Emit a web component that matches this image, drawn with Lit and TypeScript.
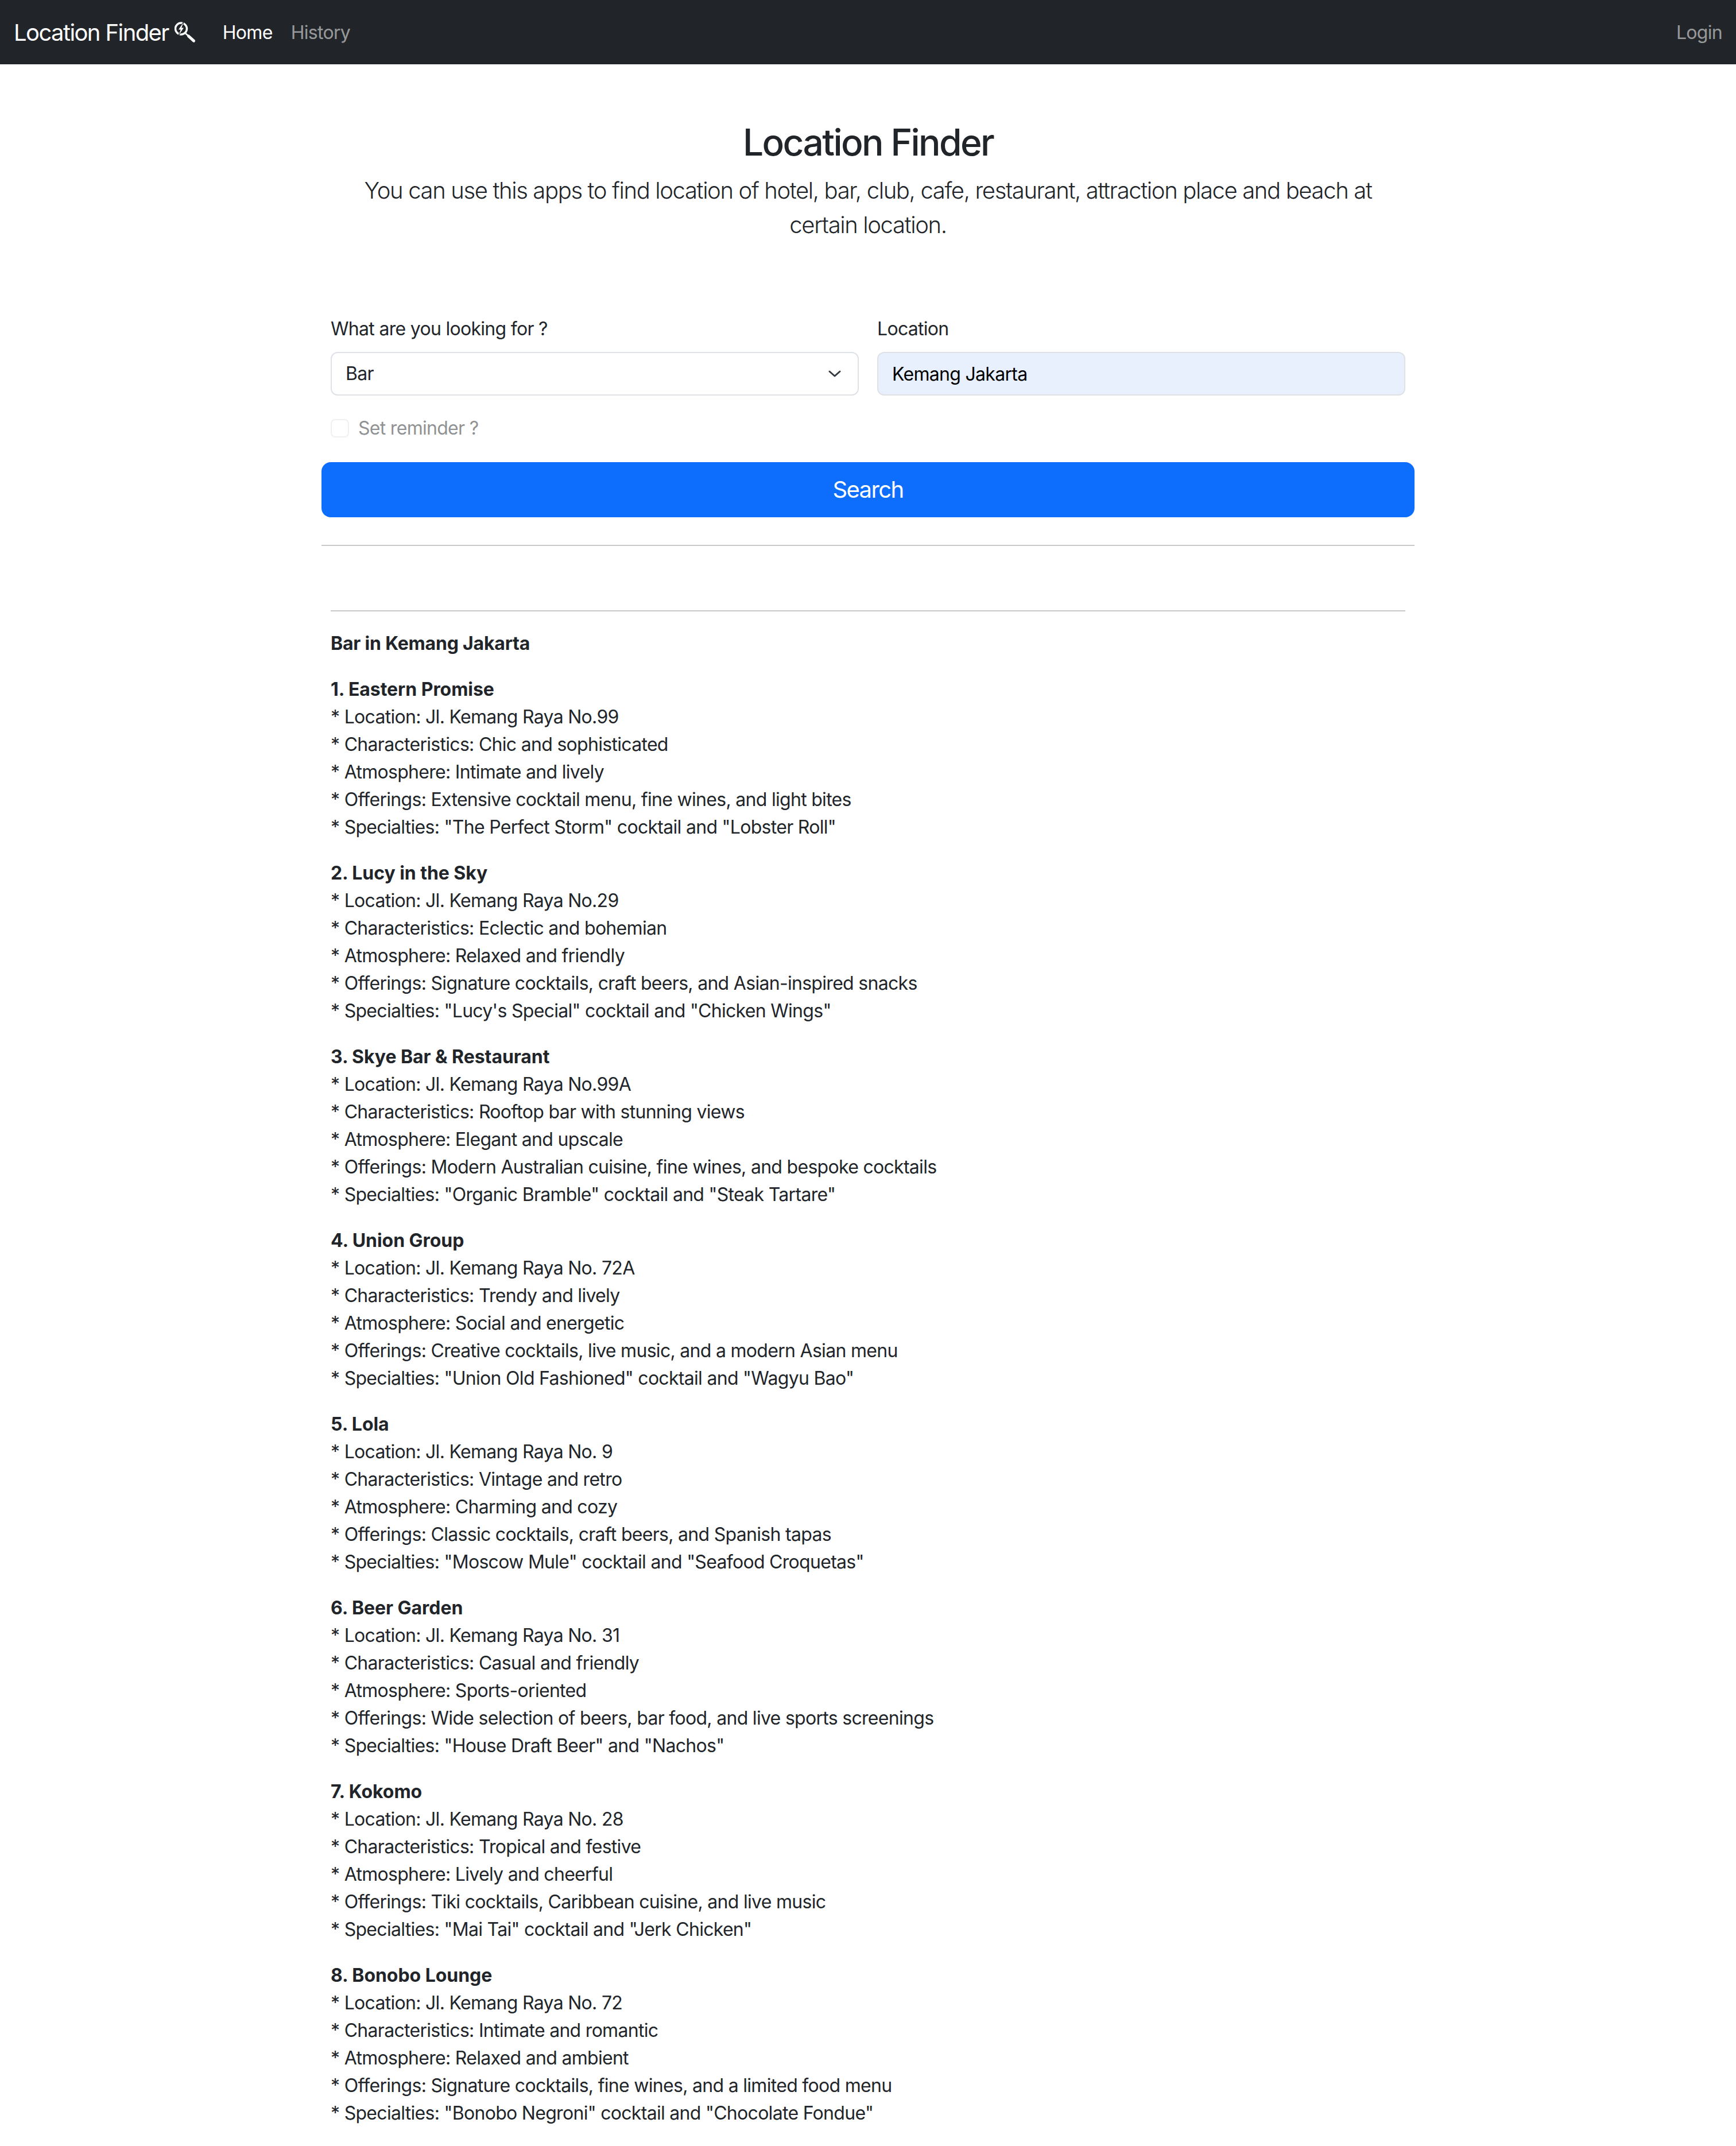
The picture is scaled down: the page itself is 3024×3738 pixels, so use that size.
import { LitElement, html, css, svg } from 'lit';
import { customElement } from 'lit/decorators.js';

// the list as it shows on the page
const PLACES = [
  { name: '1. Eastern Promise', lines: ['Location: Jl. Kemang Raya No.99', 'Characteristics: Chic and sophisticated', 'Atmosphere: Intimate and lively', 'Offerings: Extensive cocktail menu, fine wines, and light bites', 'Specialties: "The Perfect Storm" cocktail and "Lobster Roll"'] },
  { name: '2. Lucy in the Sky', lines: ['Location: Jl. Kemang Raya No.29', 'Characteristics: Eclectic and bohemian', 'Atmosphere: Relaxed and friendly', 'Offerings: Signature cocktails, craft beers, and Asian-inspired snacks', 'Specialties: "Lucy\'s Special" cocktail and "Chicken Wings"'] },
  { name: '3. Skye Bar & Restaurant', lines: ['Location: Jl. Kemang Raya No.99A', 'Characteristics: Rooftop bar with stunning views', 'Atmosphere: Elegant and upscale', 'Offerings: Modern Australian cuisine, fine wines, and bespoke cocktails', 'Specialties: "Organic Bramble" cocktail and "Steak Tartare"'] },
  { name: '4. Union Group', lines: ['Location: Jl. Kemang Raya No. 72A', 'Characteristics: Trendy and lively', 'Atmosphere: Social and energetic', 'Offerings: Creative cocktails, live music, and a modern Asian menu', 'Specialties: "Union Old Fashioned" cocktail and "Wagyu Bao"'] },
  { name: '5. Lola', lines: ['Location: Jl. Kemang Raya No. 9', 'Characteristics: Vintage and retro', 'Atmosphere: Charming and cozy', 'Offerings: Classic cocktails, craft beers, and Spanish tapas', 'Specialties: "Moscow Mule" cocktail and "Seafood Croquetas"'] },
  { name: '6. Beer Garden', lines: ['Location: Jl. Kemang Raya No. 31', 'Characteristics: Casual and friendly', 'Atmosphere: Sports-oriented', 'Offerings: Wide selection of beers, bar food, and live sports screenings', 'Specialties: "House Draft Beer" and "Nachos"'] },
  { name: '7. Kokomo', lines: ['Location: Jl. Kemang Raya No. 28', 'Characteristics: Tropical and festive', 'Atmosphere: Lively and cheerful', 'Offerings: Tiki cocktails, Caribbean cuisine, and live music', 'Specialties: "Mai Tai" cocktail and "Jerk Chicken"'] },
  { name: '8. Bonobo Lounge', lines: ['Location: Jl. Kemang Raya No. 72', 'Characteristics: Intimate and romantic', 'Atmosphere: Relaxed and ambient', 'Offerings: Signature cocktails, fine wines, and a limited food menu', 'Specialties: "Bonobo Negroni" cocktail and "Chocolate Fondue"'] },
];

const finderIcon = svg`
  <svg class="brand-icon" viewBox="0 0 38 38" fill="none" stroke="#fff">
    <circle cx="11.5" cy="12" r="10" stroke-width="3.4" />
    <path d="M18.5 19.5l5.5 5" stroke-width="2.6" />
    <path d="M24.5 25l9 8.2" stroke-width="5" stroke-linecap="round" />
    <polygon class="bolt" points="15.5,1 7,13.5 10.8,13.5 7.5,23 16,10.5 12.2,10.5" />
  </svg>`;

@customElement('app-root')
export class AppRoot extends LitElement {
  static styles = css`
    :host {
      display: block;
      height: 3738px;
      overflow: hidden;
      background: #fff;
      color: #212529;
      font-family: Inter, 'Liberation Sans', sans-serif;
      font-size: 32px;
      line-height: 48px;
      letter-spacing: -0.7px;
    }
    .navbar {
      display: flex;
      box-sizing: border-box;
      align-items: center;
      height: 112px;
      padding: 2px 24px 0;
      background: #212529;
    }
    .brand {
      display: flex;
      align-items: center;
      margin-right: 30px;
      color: #fff;
      font-size: 40px;
      letter-spacing: -1.6px;
      line-height: 60px;
    }
    .brand-icon {
      width: 38px;
      height: 38px;
      margin: 0 0 0 10px;
    }
    .bolt {
      fill: #fff;
      stroke: #212529;
      stroke-width: 2;
      paint-order: stroke;
    }
    .nav-link {
      padding: 0 16px;
      color: rgba(255, 255, 255, 0.55);
    }
    .nav-link.active {
      color: #fff;
    }
    .spacer {
      flex: 1;
    }
    .login {
      padding: 0;
    }
    .main {
      width: 1904px;
      margin: 0 auto;
    }
    .hero {
      padding: 97px 16px 0;
      text-align: center;
    }
    .hero h3 {
      margin: 0 0 16px;
      font-size: 64px;
      font-weight: 500;
      letter-spacing: -2.6px;
      line-height: 77px;
    }
    .lead {
      margin: 0;
      font-size: 40px;
      font-weight: 300;
      letter-spacing: -1.36px;
      line-height: 60px;
    }
    .form-row {
      display: grid;
      grid-template-columns: 1fr 1fr;
      gap: 32px;
      margin-top: 127px;
      padding: 0 16px;
    }
    label {
      display: block;
      margin-bottom: 16px;
    }
    .select-wrap {
      position: relative;
    }
    .select-wrap svg {
      position: absolute;
      top: 32px;
      right: 31px;
      width: 22px;
      height: 12px;
    }
    select,
    input[type='text'] {
      display: block;
      box-sizing: border-box;
      width: 100%;
      height: 76px;
      padding: 0 24px;
      border: 2px solid #dee2e6;
      border-radius: 12px;
      font: inherit;
      letter-spacing: inherit;
      outline: none;
    }
    select {
      appearance: none;
      background: #fff;
      color: #212529;
    }
    input[type='text'] {
      background: #e8f0fe;
      color: #000;
    }
    .check {
      display: flex;
      align-items: center;
      gap: 16px;
      margin-top: 33px;
      padding: 0 16px;
      opacity: 0.5;
    }
    .box {
      box-sizing: border-box;
      width: 32px;
      height: 32px;
      border: 2px solid #dee2e6;
      border-radius: 8px;
    }
    .search {
      display: block;
      width: 100%;
      height: 96px;
      margin-top: 35px;
      border: none;
      border-radius: 16px;
      background: #0d6efd;
      color: #fff;
      font: inherit;
      font-size: 40px;
      letter-spacing: -1.6px;
    }
    hr {
      height: 2px;
      margin: 0;
      border: none;
      background: #c8c9ca;
    }
    .rule-top {
      margin-top: 48px;
    }
    .results {
      padding: 112px 16px 0;
    }
    .results h6 {
      margin: 32px 0;
      font-size: 32px;
      font-weight: 700;
      letter-spacing: -0.2px;
      line-height: 48px;
    }
    .place {
      margin: 0 0 32px;
    }
    .place b {
      display: block;
      font-weight: 700;
      letter-spacing: -0.05px;
    }
    .place span {
      display: block;
    }
  `;

  render() {
    return html`
      <nav class="navbar">
        <div class="brand">Location Finder${finderIcon}</div>
        <div class="nav-link active">Home</div>
        <div class="nav-link">History</div>
        <div class="spacer"></div>
        <div class="nav-link login">Login</div>
      </nav>
      <div class="main">
        <div class="hero">
          <h3>Location Finder</h3>
          <p class="lead">You can use this apps to find location of hotel, bar, club, cafe, restaurant, attraction place and beach at certain location.</p>
        </div>
        <div class="form-row">
          <div>
            <label>What are you looking for ?</label>
            <div class="select-wrap">
              <select><option>Bar</option></select>
              <svg viewBox="0 0 22 12" fill="none" stroke="#343a40" stroke-width="3" stroke-linecap="round" stroke-linejoin="round"><path d="M2 2l9 8 9-8" /></svg>
            </div>
          </div>
          <div>
            <label>Location</label>
            <input type="text" .value=${'Kemang Jakarta'} />
          </div>
        </div>
        <div class="check"><div class="box"></div>Set reminder ?</div>
        <button class="search">Search</button>
        <hr class="rule-top" />
        <div class="results">
          <hr />
          <h6>Bar in Kemang Jakarta</h6>
          ${PLACES.map(
            (p) => html`
              <div class="place">
                <b>${p.name}</b>
                ${p.lines.map((l) => html`<span>* ${l}</span>`)}
              </div>
            `
          )}
        </div>
      </div>
    `;
  }
}
